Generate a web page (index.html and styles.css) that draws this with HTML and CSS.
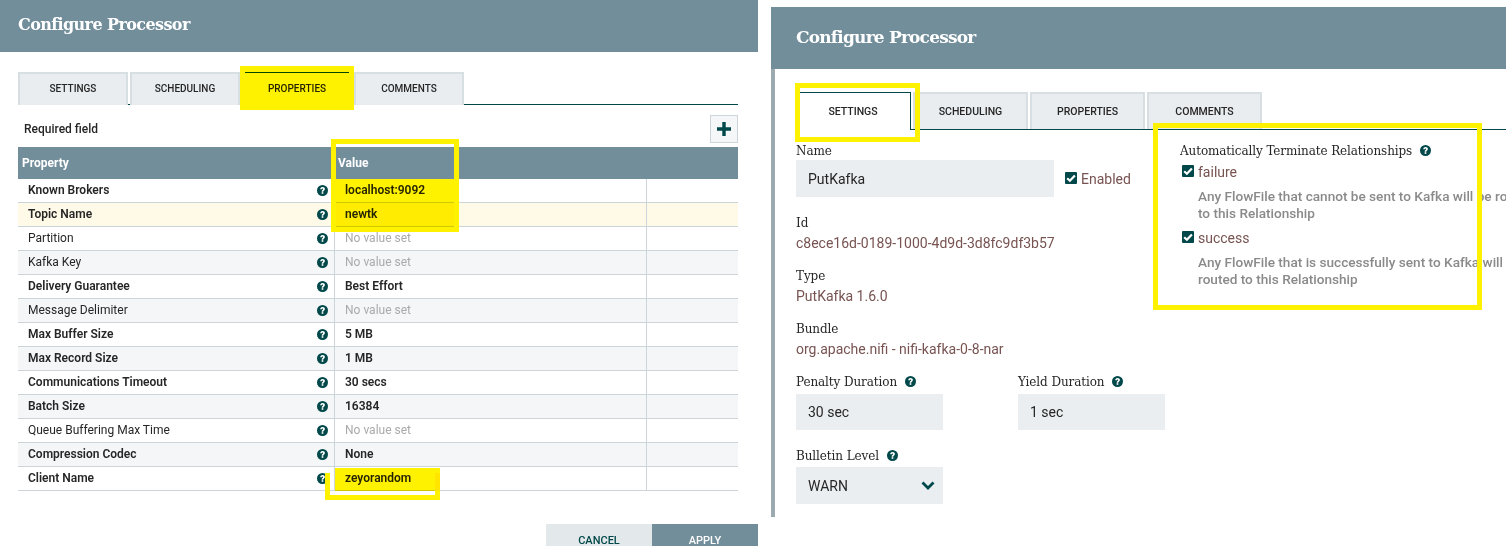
FILE: index.html
```html
<!DOCTYPE html>
<html lang="en">
<head>
  <meta charset="UTF-8">
  <title>Configure Processor</title>
  <link rel="stylesheet" href="styles.css">
</head>
<body>

<svg class="defs" width="0" height="0">
  <symbol id="help" viewBox="0 0 24 24">
    <circle cx="12" cy="12" r="12" fill="#004849"/>
    <path d="M7 9.200c.3-3 2.500-4.700 5.200-4.700 2.800 0 5.100 1.800 5.100 4.300 0 3.200-3.500 3.300-3.500 5.700h-3.700c0-3.800 3.300-3.800 3.300-5.400 0-.7-.5-1.200-1.300-1.200-.9 0-1.300.6-1.400 1.600z" fill="#fff"/>
    <rect x="10.100" y="15.700" width="3.700" height="3.500" fill="#fff"/>
  </symbol>
  <symbol id="check" viewBox="0 0 12 12">
    <rect width="12" height="12" rx="1" fill="#004849"/>
    <path d="M2.200 6.200l2.700 2.600 5-5.400" fill="none" stroke="#fff" stroke-width="2.200"/>
  </symbol>
</svg>

<!-- properties tab window -->
<section class="window win-props">
  <div class="win-head">Configure Processor</div>
  <div class="tabs tabs-props">
    <div class="tab">Settings</div>
    <div class="tab">Scheduling</div>
    <div class="tab active">Properties</div>
    <div class="tab">Comments</div>
  </div>
  <div class="req-row">
    <span class="req-label">Required field</span>
    <span class="add-btn">
      <svg width="14" height="14" viewBox="0 0 14 14"><path d="M5.300 0h3.400v5.300H14v3.400H8.700V14H5.300V8.700H0V5.300h5.300z" fill="#004849"/></svg>
    </span>
  </div>
  <div class="grid">
    <div class="grid-head"><span class="col-name">Property</span><span class="col-val">Value</span></div>
    <div class="row">
      <div class="cell-name req">Known Brokers<svg class="help"><use href="#help"/></svg></div>
      <div class="cell-val req">localhost:9092</div><div class="cell-end"></div>
    </div>
    <div class="row row-hi">
      <div class="cell-name req">Topic Name<svg class="help"><use href="#help"/></svg></div>
      <div class="cell-val req">newtk</div><div class="cell-end"></div>
    </div>
    <div class="row">
      <div class="cell-name">Partition<svg class="help"><use href="#help"/></svg></div>
      <div class="cell-val unset">No value set</div><div class="cell-end"></div>
    </div>
    <div class="row row-alt">
      <div class="cell-name">Kafka Key<svg class="help"><use href="#help"/></svg></div>
      <div class="cell-val unset">No value set</div><div class="cell-end"></div>
    </div>
    <div class="row">
      <div class="cell-name req">Delivery Guarantee<svg class="help"><use href="#help"/></svg></div>
      <div class="cell-val req">Best Effort</div><div class="cell-end"></div>
    </div>
    <div class="row row-alt">
      <div class="cell-name">Message Delimiter<svg class="help"><use href="#help"/></svg></div>
      <div class="cell-val unset">No value set</div><div class="cell-end"></div>
    </div>
    <div class="row">
      <div class="cell-name req">Max Buffer Size<svg class="help"><use href="#help"/></svg></div>
      <div class="cell-val req">5 MB</div><div class="cell-end"></div>
    </div>
    <div class="row row-alt">
      <div class="cell-name req">Max Record Size<svg class="help"><use href="#help"/></svg></div>
      <div class="cell-val req">1 MB</div><div class="cell-end"></div>
    </div>
    <div class="row">
      <div class="cell-name req">Communications Timeout<svg class="help"><use href="#help"/></svg></div>
      <div class="cell-val req">30 secs</div><div class="cell-end"></div>
    </div>
    <div class="row row-alt">
      <div class="cell-name req">Batch Size<svg class="help"><use href="#help"/></svg></div>
      <div class="cell-val req">16384</div><div class="cell-end"></div>
    </div>
    <div class="row">
      <div class="cell-name">Queue Buffering Max Time<svg class="help"><use href="#help"/></svg></div>
      <div class="cell-val unset">No value set</div><div class="cell-end"></div>
    </div>
    <div class="row row-alt">
      <div class="cell-name req">Compression Codec<svg class="help"><use href="#help"/></svg></div>
      <div class="cell-val req">None</div><div class="cell-end"></div>
    </div>
    <div class="row">
      <div class="cell-name req">Client Name<svg class="help"><use href="#help"/></svg></div>
      <div class="cell-val req">zeyorandom</div><div class="cell-end"></div>
    </div>
  </div>
  <div class="actions">
    <div class="btn btn-cancel">Cancel</div>
    <div class="btn btn-apply">Apply</div>
  </div>
</section>

<!-- settings tab window -->
<section class="window win-settings">
  <div class="win-head">Configure Processor</div>
  <div class="settings-body">
    <div class="tabs tabs-settings">
      <div class="tab active">Settings</div>
      <div class="tab">Scheduling</div>
      <div class="tab">Properties</div>
      <div class="tab">Comments</div>
    </div>
    <div class="settings-cols">
      <div class="col-left">
        <div class="lbl lbl-name">Name</div>
        <div class="name-row">
          <div class="field field-name">PutKafka</div>
          <svg class="chk chk-enabled"><use href="#check"/></svg>
          <span class="txt-enabled">Enabled</span>
        </div>
        <div class="lbl lbl-id">Id</div>
        <div class="val">c8ece16d-0189-1000-4d9d-3d8fc9df3b57</div>
        <div class="lbl lbl-info">Type</div>
        <div class="val">PutKafka 1.6.0</div>
        <div class="lbl lbl-info">Bundle</div>
        <div class="val">org.apache.nifi - nifi-kafka-0-8-nar</div>
        <div class="dur-row">
          <div class="dur">
            <div class="lbl">Penalty Duration<svg class="help help-lbl"><use href="#help"/></svg></div>
            <div class="field field-dur">30 sec</div>
          </div>
          <div class="dur">
            <div class="lbl">Yield Duration<svg class="help help-lbl"><use href="#help"/></svg></div>
            <div class="field field-dur">1 sec</div>
          </div>
        </div>
        <div class="lbl lbl-bulletin">Bulletin Level<svg class="help help-lbl"><use href="#help"/></svg></div>
        <div class="field field-dur field-select">WARN
          <svg width="14" height="9" viewBox="0 0 14 9"><path d="M1.500 1.500L7 7l5.500-5.500" fill="none" stroke="#004849" stroke-width="2.800"/></svg>
        </div>
      </div>
      <div class="col-right">
        <div class="lbl">Automatically Terminate Relationships<svg class="help help-lbl"><use href="#help"/></svg></div>
        <div class="rel">
          <svg class="chk"><use href="#check"/></svg><span class="rel-name">failure</span>
          <div class="rel-desc">Any FlowFile that cannot be sent to Kafka will be routed<br>to this Relationship</div>
        </div>
        <div class="rel">
          <svg class="chk"><use href="#check"/></svg><span class="rel-name">success</span>
          <div class="rel-desc">Any FlowFile that is successfully sent to Kafka will be<br>routed to this Relationship</div>
        </div>
      </div>
    </div>
  </div>
</section>

<!-- yellow markers drawn over the screenshots -->
<div class="mark mark-tab"><div class="mark-fill"></div></div>
<div class="mark mark-value"><div class="mark-fill"></div></div>
<div class="mark mark-client"><div class="mark-fill"></div></div>
<div class="mark mark-settings"></div>
<div class="mark mark-rel"></div>

</body>
</html>
```

FILE: styles.css
```css
* {
  margin: 0;
  padding: 0;
  box-sizing: border-box;
}

html, body {
  width: 1506px;
  height: 546px;
  overflow: hidden;
}

body {
  position: relative;
  background: white;
  font-family: Roboto, sans-serif;
  color: #262626;
}

.defs {
  position: absolute;
}

.window {
  position: absolute;
  overflow: hidden;
  background: white;
}

.win-props {
  left: 0;
  top: 0;
  width: 758px;
  height: 546px;
}

.win-settings {
  left: 771px;
  top: 7px;
  width: 735px;
  height: 510px;
  background: #9ca9af;
}

.win-head {
  background: #728e9b;
  color: white;
  font-family: "DejaVu Serif", serif;
  font-weight: bold;
  font-size: 16px;
  letter-spacing: -0.6px;
  height: 52px;
  line-height: 50px;
  padding-left: 18px;
}

.win-settings .win-head {
  height: 62px;
  line-height: 61px;
  font-size: 17px;
  letter-spacing: -0.8px;
  padding-left: 25px;
}

/* tabs */
.tabs {
  display: flex;
  border-bottom: 1px solid #004849;
}

.tab {
  background: #e9edf0;
  border: 2px solid #d8dfe3;
  border-bottom: none;
  color: #262626;
  text-transform: uppercase;
  font-size: 10px;
  font-weight: 500;
  text-align: center;
}

.tab.active {
  background: white;
  border: none;
  border-top: 1px solid #004849;
}

.tabs-props {
  margin: 20px 20px 0 18px;
  height: 33px;
  gap: 2px;
}

.tabs-props .tab {
  width: 110px;
  height: 33px;
  line-height: 29px;
}

.tabs-props .tab.active {
  line-height: 31px;
}

.tabs-settings {
  margin-left: 25px;
  height: 38px;
  gap: 2px;
}

.tabs-settings .tab {
  width: 115px;
  height: 37px;
  line-height: 35px;
  font-size: 10.5px;
}

.tabs-settings .tab.active {
  width: 111px;
  height: 38px;
  line-height: 37px;
  padding-right: 4px;
  border-right: 1px solid #004849;
}

/* properties grid */
.req-row {
  display: flex;
  justify-content: space-between;
  align-items: center;
  margin: 10px 20px 4px 24px;
  height: 28px;
}

.req-label {
  font-size: 12px;
  font-weight: 500;
}

.add-btn {
  display: flex;
  align-items: center;
  justify-content: center;
  width: 28px;
  height: 28px;
  background: #f4f6f7;
  border: 1px solid #ccd5d9;
}

.grid {
  margin: 0 20px 0 18px;
  font-size: 12px;
}

.grid-head {
  display: flex;
  height: 32px;
  line-height: 32px;
  background: #728e9b;
  color: white;
  font-weight: bold;
}

.col-name {
  width: 316px;
  padding-left: 4px;
}

.col-val {
  padding-left: 4px;
}

.row {
  display: flex;
  height: 24px;
  line-height: 22px;
  border-bottom: 1px solid #ccd5d9;
}

.row-alt {
  background: #f4f6f7;
}

.row-hi {
  background: #fff9e8;
}

.cell-name {
  display: flex;
  justify-content: space-between;
  align-items: center;
  width: 317px;
  padding: 0 6px 1px 10px;
  border-right: 1px solid #ccd5d9;
}

.cell-val {
  width: 312px;
  padding-left: 10px;
  border-right: 1px solid #ccd5d9;
}

.req {
  font-weight: 600;
}

.unset {
  color: #aaaaaa;
}

.help {
  flex: none;
  width: 11px;
  height: 11px;
}

.actions {
  position: absolute;
  right: 0;
  bottom: 0;
  display: flex;
}

.btn {
  width: 106px;
  height: 22px;
  padding-top: 11px;
  line-height: 12px;
  text-align: center;
  text-transform: uppercase;
  font-size: 11px;
  font-weight: 500;
}

.btn-cancel {
  background: #e3e8eb;
  color: #004849;
}

.btn-apply {
  background: #728e9b;
  color: white;
}

/* settings */
.settings-body {
  margin-left: 4px;
  height: 448px;
  padding-top: 23px;
  background: white;
}

.settings-cols {
  display: flex;
}

.col-left {
  flex: none;
  width: 405px;
  margin-right: 0;
  padding-left: 21px;
}

.col-right {
  padding-top: 13px;
  padding-left: 0;
  white-space: nowrap;
}

.lbl {
  font-family: "DejaVu Serif", serif;
  font-size: 12px;
  letter-spacing: -0.1px;
  line-height: 16px;
  color: #262626;
}

.lbl-name {
  margin-top: 13px;
  margin-bottom: 1px;
}

.lbl-id {
  margin-top: 18px;
}

.lbl-info {
  margin-top: 16px;
}

.name-row {
  display: flex;
  align-items: center;
  white-space: nowrap;
}

.field {
  background: #eaeef0;
  font-size: 14px;
  color: #262626;
  padding-left: 12px;
}

.field-name {
  flex: none;
  width: 258px;
  height: 37px;
  line-height: 38px;
}

.chk {
  width: 12px;
  height: 12px;
  margin-right: 4px;
}

.chk-enabled {
  margin-left: 11px;
  margin-top: -2px;
}

.txt-enabled,
.val,
.rel-name {
  font-size: 14px;
  color: #775351;
}

.val {
  margin-top: 3px;
  line-height: 18px;
  white-space: nowrap;
}

.dur-row {
  display: flex;
  gap: 75px;
  margin-top: 16px;
}

.field-dur {
  width: 147px;
  height: 36px;
  line-height: 36px;
  margin-top: 4px;
}

.help-lbl {
  width: 11px;
  height: 11px;
  margin-left: 8px;
  vertical-align: -1px;
}

.lbl-bulletin {
  margin-top: 18px;
}

.field-select {
  display: flex;
  justify-content: space-between;
  align-items: center;
  margin-top: 3px;
  padding-right: 8px;
  height: 37px;
}

.rel {
  margin-top: 3px;
  margin-left: 2px;
}

.rel + .rel {
  margin-top: 6px;
}

.rel-desc {
  margin: 7px 0 0 16px;
  font-size: 13.6px;
  font-weight: 500;
  line-height: 17px;
  color: #8a8a8a;
}

/* yellow markers */
.mark {
  position: absolute;
  border: 5px solid #fff200;
}

.mark-fill {
  position: absolute;
  background: #fff200;
  mix-blend-mode: multiply;
}

.mark-tab {
  left: 240px;
  top: 66px;
  width: 114px;
  height: 44px;
}

.mark-tab .mark-fill {
  inset: 0;
}

.mark-value {
  left: 331px;
  top: 139px;
  width: 128px;
  height: 93px;
}

.mark-value .mark-fill {
  left: 0;
  right: 0;
  top: 35px;
  bottom: 0;
}

.mark-client {
  left: 325px;
  top: 473px;
  width: 115px;
  height: 27px;
  border-top: none;
}

.mark-client .mark-fill {
  left: 5px;
  right: -5px;
  top: -5px;
  bottom: 4px;
}

.mark-settings {
  left: 795px;
  top: 83px;
  width: 125px;
  height: 59px;
}

.mark-rel {
  left: 1153px;
  top: 123px;
  width: 329px;
  height: 187px;
}
```
